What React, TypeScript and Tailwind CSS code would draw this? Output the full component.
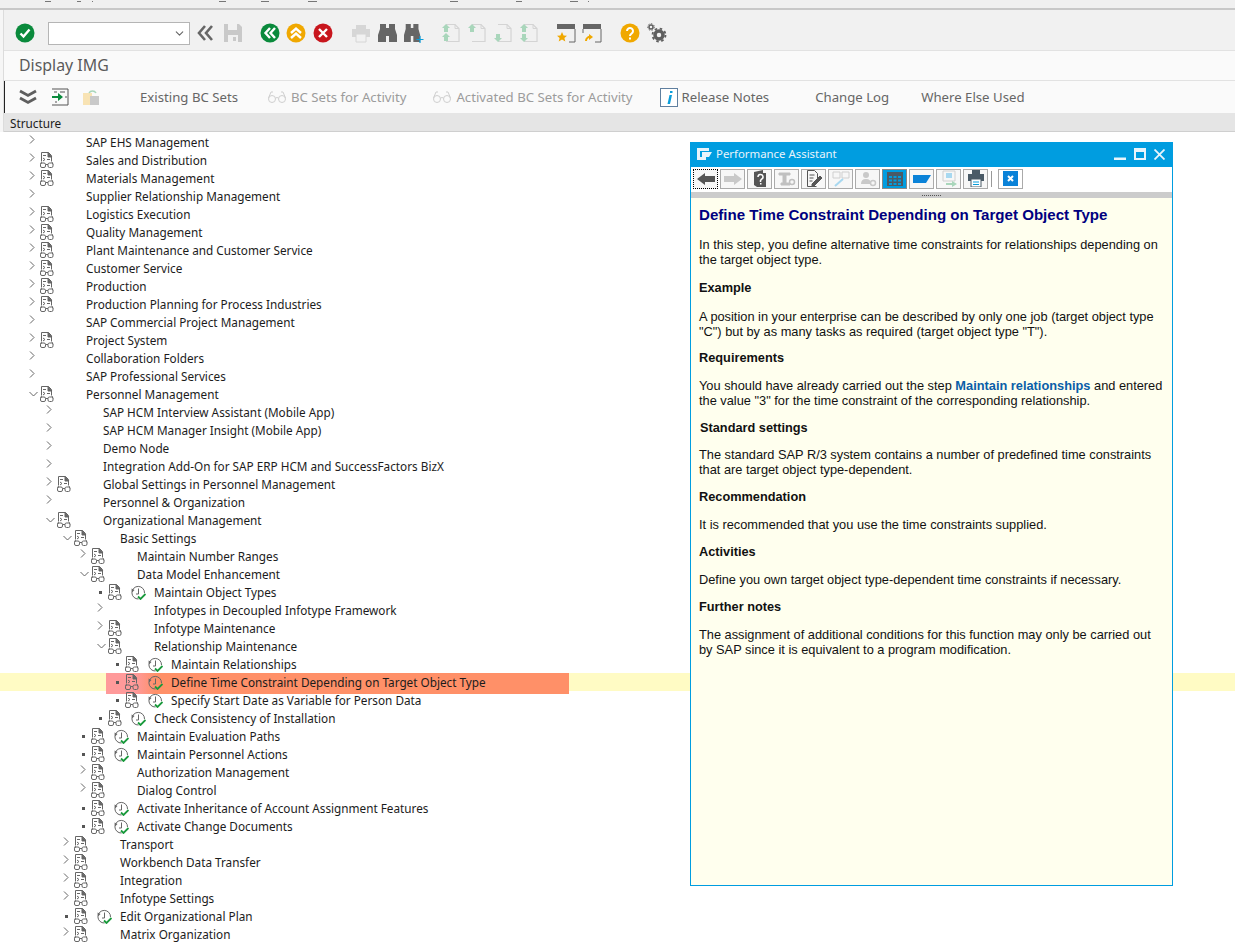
import type { ReactNode } from 'react'
import { ChevronDown } from 'lucide-react'

type Row = {
  label: string
  level: number
  arrow?: 'closed' | 'open'
  doc?: boolean
  run?: boolean
  selected?: boolean
}

const rows: Row[] = [
  { label: 'SAP EHS Management', level: 0, arrow: 'closed' },
  { label: 'Sales and Distribution', level: 0, arrow: 'closed', doc: true },
  { label: 'Materials Management', level: 0, arrow: 'closed', doc: true },
  { label: 'Supplier Relationship Management', level: 0, arrow: 'closed' },
  { label: 'Logistics Execution', level: 0, arrow: 'closed', doc: true },
  { label: 'Quality Management', level: 0, arrow: 'closed', doc: true },
  { label: 'Plant Maintenance and Customer Service', level: 0, arrow: 'closed', doc: true },
  { label: 'Customer Service', level: 0, arrow: 'closed', doc: true },
  { label: 'Production', level: 0, arrow: 'closed', doc: true },
  { label: 'Production Planning for Process Industries', level: 0, arrow: 'closed', doc: true },
  { label: 'SAP Commercial Project Management', level: 0, arrow: 'closed' },
  { label: 'Project System', level: 0, arrow: 'closed', doc: true },
  { label: 'Collaboration Folders', level: 0, arrow: 'closed' },
  { label: 'SAP Professional Services', level: 0, arrow: 'closed' },
  { label: 'Personnel Management', level: 0, arrow: 'open', doc: true },
  { label: 'SAP HCM Interview Assistant (Mobile App)', level: 1, arrow: 'closed' },
  { label: 'SAP HCM Manager Insight (Mobile App)', level: 1, arrow: 'closed' },
  { label: 'Demo Node', level: 1, arrow: 'closed' },
  { label: 'Integration Add-On for SAP ERP HCM and SuccessFactors BizX', level: 1, arrow: 'closed' },
  { label: 'Global Settings in Personnel Management', level: 1, arrow: 'closed', doc: true },
  { label: 'Personnel & Organization', level: 1, arrow: 'closed' },
  { label: 'Organizational Management', level: 1, arrow: 'open', doc: true },
  { label: 'Basic Settings', level: 2, arrow: 'open', doc: true },
  { label: 'Maintain Number Ranges', level: 3, arrow: 'closed', doc: true },
  { label: 'Data Model Enhancement', level: 3, arrow: 'open', doc: true },
  { label: 'Maintain Object Types', level: 4, doc: true, run: true },
  { label: 'Infotypes in Decoupled Infotype Framework', level: 4, arrow: 'closed' },
  { label: 'Infotype Maintenance', level: 4, arrow: 'closed', doc: true },
  { label: 'Relationship Maintenance', level: 4, arrow: 'open', doc: true },
  { label: 'Maintain Relationships', level: 5, doc: true, run: true },
  { label: 'Define Time Constraint Depending on Target Object Type', level: 5, doc: true, run: true, selected: true },
  { label: 'Specify Start Date as Variable for Person Data', level: 5, doc: true, run: true },
  { label: 'Check Consistency of Installation', level: 4, doc: true, run: true },
  { label: 'Maintain Evaluation Paths', level: 3, doc: true, run: true },
  { label: 'Maintain Personnel Actions', level: 3, doc: true, run: true },
  { label: 'Authorization Management', level: 3, arrow: 'closed', doc: true },
  { label: 'Dialog Control', level: 3, arrow: 'closed', doc: true },
  { label: 'Activate Inheritance of Account Assignment Features', level: 3, doc: true, run: true },
  { label: 'Activate Change Documents', level: 3, doc: true, run: true },
  { label: 'Transport', level: 2, arrow: 'closed', doc: true },
  { label: 'Workbench Data Transfer', level: 2, arrow: 'closed', doc: true },
  { label: 'Integration', level: 2, arrow: 'closed', doc: true },
  { label: 'Infotype Settings', level: 2, arrow: 'closed', doc: true },
  { label: 'Edit Organizational Plan', level: 2, doc: true, run: true },
  { label: 'Matrix Organization', level: 2, arrow: 'closed', doc: true },
]

// bottoms of the menu bar text, which the screenshot cuts off
const menuScraps = [
  [45, 6], [77, 4], [92, 1], [219, 7], [261, 8], [308, 9], [450, 8], [516, 6], [570, 8], [588, 1],
]

function DocIcon() {
  return (
    <svg width="14" height="16" viewBox="0 0 14 16" fill="none" stroke="#666" strokeWidth="1">
      <path d="M1.500 9.500V.5h7l3 3v6" />
      <path d="M8 .5l4 4.500H8z" fill="#666" />
      <path d="M3 3.500h3M3 6l2 1.500L3 9M7 7.500h3" />
      <rect x=".5" y="11" width="5" height="4.500" rx="1.500" />
      <rect x="8" y="11" width="5" height="4.500" rx="1.500" />
      <path d="M5.500 12.500h2.500M.5 12.500l1-2.500M13 12.500l-1-2.500" />
    </svg>
  )
}

function RunIcon() {
  return (
    <svg width="15" height="15" viewBox="0 0 15 15" fill="none">
      <path d="M13.500 8a6.300 6.300 0 1 0-6 6" stroke="#666" strokeWidth="1" />
      <path d="M.5 3.500l.5 4L3.500 5z" fill="#666" />
      <path d="M7.500 3.500V9H5" stroke="#666" strokeWidth="1" />
      <path d="M7 11.500l2.500 2.500L14.500 9" stroke="#1a9a3c" strokeWidth="1.800" />
    </svg>
  )
}

function TreeRow({ row }: { row: Row }) {
  return (
    <div className={`relative flex h-[18px] items-center ${row.selected ? 'bg-[#fffbc4]' : ''}`}>
      {row.selected && (
        <div className="absolute left-[106px] top-0 h-[21px] w-[463px] bg-[linear-gradient(90deg,#ff9a9a_0,#ff9a9a_30px,#ff9068_50px)]" />
      )}
      <div className="relative flex h-full items-center" style={{ marginLeft: row.level * 17 }}>
        <span className="flex w-[40px] items-center pl-[29px]">
          {row.arrow === 'closed' && (
            <svg width="6" height="9" viewBox="0 0 6 9" fill="none" stroke="#666" className="-translate-y-[3px]">
              <path d="M1 .5l4 4-4 4" />
            </svg>
          )}
          {row.arrow === 'open' && (
            <svg width="9" height="6" viewBox="0 0 9 6" fill="none" stroke="#666">
              <path d="M.5 1l4 4 4-4" />
            </svg>
          )}
          {!row.arrow && row.doc && <span className="ml-[2px] h-[3px] w-[3px] shrink-0 bg-[#555]" />}
        </span>
        <span className="flex h-[16px] w-[14px] justify-center">{row.doc && <DocIcon />}</span>
        <span className="ml-[9px] flex h-[15px] w-[15px] justify-center">{row.run && <RunIcon />}</span>
        <span className="ml-[8px] translate-y-[1px] whitespace-nowrap text-[11.750px] text-[#1c1c1c]">{row.label}</span>
      </div>
    </div>
  )
}

function RoundIcon({ color, children }: { color: string; children: ReactNode }) {
  return (
    <svg width="20" height="20" viewBox="0 0 20 20">
      <circle cx="10" cy="10" r="9.500" fill={color} />
      <g fill="none" stroke="#fff" strokeWidth="2.400">{children}</g>
    </svg>
  )
}

function Binoculars({ plus }: { plus?: boolean }) {
  return (
    <svg width="20" height="20" viewBox="0 0 20 20">
      <path d="M2 1h6v4h3V1h6v5l2 6v7h-8v-6H8v6H0v-7l2-6z" fill="#666" transform={plus ? 'scale(.85 1)' : ''} />
      {plus && <path d="M16 13v7M12.500 16.500h7" stroke="#0a9dda" strokeWidth="1.200" />}
    </svg>
  )
}

function PageArrows({ up, down }: { up: number; down: number }) {
  const upArrow = (y: number) => <path key={`u${y}`} d={`M5 ${y}l4 4H7v4H3v-4H1z`} fill="#a9d6bb" />
  const downArrow = (y: number) => <path key={`d${y}`} d={`M5 ${y + 8}l4-4H7v-4H3v4H1z`} fill="#a9d6bb" />
  return (
    <svg width="20" height="20" viewBox="0 0 20 20" fill="none">
      <path d="M5 1.500h9l4 4v13H5" stroke="#d4d4d4" strokeWidth="1.200" />
      <path d="M14 1.500v4h4" stroke="#d4d4d4" />
      {up === 2 && [upArrow(1), upArrow(10)]}
      {up === 1 && upArrow(1)}
      {down === 2 && [downArrow(1), downArrow(11)]}
      {down === 1 && downArrow(11)}
    </svg>
  )
}

function Glasses({ className = '' }: { className?: string }) {
  return (
    <svg width="18" height="12" viewBox="0 0 18 12" fill="none" stroke="#cfcfcf" strokeWidth="1" className={className}>
      <circle cx="4" cy="8" r="3.500" />
      <circle cx="14" cy="8" r="3.500" />
      <path d="M7.500 7q1.500-1 3 0M.5 7L3 1h2M17.500 7L15 1h-2" />
    </svg>
  )
}

function PopButton({ children, active }: { children: ReactNode; active?: boolean }) {
  return (
    <span className={`flex h-[20px] w-[25px] items-center justify-center border ${active ? 'border-[#888] bg-[#009de0]' : 'border-[#aaa] bg-[#f7f7f7]'}`}>
      {children}
    </span>
  )
}

function Heading({ children, className = '' }: { children: ReactNode; className?: string }) {
  return <p className={`h-[15px] text-[12.750px] font-bold leading-[15px] text-[#111] ${className}`}>{children}</p>
}

function Para({ children, className = '' }: { children: ReactNode; className?: string }) {
  return <p className={`text-[12.800px] leading-[14.700px] text-[#111] ${className}`}>{children}</p>
}

export default function App() {
  return (
    <div className="relative h-[944px] w-[1235px] overflow-hidden bg-white font-['Noto_Sans',sans-serif]">
      {/* clipped menu bar */}
      <div className="relative h-[10px] border-b-2 border-[#c8c8c8] bg-[#f0f0f0]">
        {menuScraps.map(([x, w]) => (
          <span key={x} className="absolute top-[1px] h-[1px] bg-[#777]" style={{ left: x, width: w }} />
        ))}
      </div>

      {/* main toolbar */}
      <div className="flex h-[40px] items-center bg-[#f1f1f1] pl-[15px] pt-[6px]">
        <RoundIcon color="#0a8a3c"><path d="M5.500 10.500l3 3 6-7" /></RoundIcon>
        <div className="ml-[13px] flex h-[23px] w-[142px] items-center justify-end border border-[#b5b5b5] bg-white pr-[3px]">
          <ChevronDown size={13} color="#666" />
        </div>
        <svg width="17" height="16" viewBox="0 0 17 16" className="ml-[7px]" fill="none" stroke="#666" strokeWidth="2.600">
          <path d="M8 1L2 8l6 7M15 1L9 8l6 7" />
        </svg>
        <svg width="20" height="20" viewBox="0 0 20 20" className="ml-[9px]">
          <path d="M1 1h15l3 3v15H1z" fill="#c9c9c9" />
          <path d="M5 1h9v6H5zM5 12h10v7H5z" fill="#f1f1f1" />
          <path d="M10 14h3v4h-3z" fill="#c9c9c9" />
        </svg>
        <span className="ml-[17px]" />
        <RoundIcon color="#0a8a3c"><path d="M10 5l-4.500 5 4.500 5M15 5l-4.500 5 4.500 5" /></RoundIcon>
        <span className="ml-[6px]" />
        <RoundIcon color="#f0a800"><path d="M5 10l5-4.500 5 4.500M5 15l5-4.500 5 4.500" /></RoundIcon>
        <span className="ml-[7px]" />
        <RoundIcon color="#c8161d"><path d="M6 6l8 8M14 6l-8 8" /></RoundIcon>
        <svg width="20" height="20" viewBox="0 0 20 20" className="ml-[18px]">
          <path d="M5 2h10v4H5zM1 6h18v8H1z" fill="#d6d6d6" />
          <path d="M5 11h10v8H5z" fill="#f1f1f1" stroke="#d6d6d6" />
        </svg>
        <span className="ml-[7px]"><Binoculars /></span>
        <span className="ml-[6px]"><Binoculars plus /></span>
        <span className="ml-[17px]"><PageArrows up={2} down={0} /></span>
        <span className="ml-[6px]"><PageArrows up={1} down={0} /></span>
        <span className="ml-[6px]"><PageArrows up={0} down={1} /></span>
        <span className="ml-[6px]"><PageArrows up={1} down={1} /></span>
        <svg width="20" height="20" viewBox="0 0 20 20" className="ml-[17px]" fill="none">
          <path d="M1 1h18v5H1z" fill="#666" />
          <path d="M19 6v13h-6" stroke="#666" />
          <path d="M6 9l1.600 3.400 3.400.3-2.600 2.200.9 3.600L6 16.600 2.700 18.500l.9-3.600L1 12.700l3.400-.3z" fill="#f0a800" />
        </svg>
        <svg width="20" height="20" viewBox="0 0 20 20" className="ml-[6px]" fill="none">
          <path d="M1 1h18v5H1z" fill="#666" />
          <path d="M19 6v13h-6M1 6v4" stroke="#666" />
          <path d="M9 14a4 4 0 0 0-5 4" stroke="#f0a800" strokeWidth="2" />
          <path d="M7 11l4 3-4 3z" fill="#f0a800" />
        </svg>
        <span className="ml-[18px]" />
        <svg width="20" height="20" viewBox="0 0 20 20">
          <circle cx="10" cy="10" r="9.500" fill="#f0a800" />
          <path d="M7 8a3 3 0 1 1 4.500 2.600c-1 .6-1.500 1-1.500 2.400" fill="none" stroke="#fff" strokeWidth="2" />
          <path d="M9 14.500h2v2H9z" fill="#fff" />
        </svg>
        <svg width="20" height="20" viewBox="0 0 20 20" className="ml-[7px]" fill="none" stroke="#5f5f5f">
          <circle cx="12" cy="12" r="4" strokeWidth="3.500" />
          <circle cx="12" cy="12" r="6.500" strokeWidth="1.800" strokeDasharray="2.500 2.600" />
          <circle cx="4" cy="4" r="2" strokeWidth="1.500" />
          <circle cx="4" cy="4" r="3.300" strokeWidth="1" strokeDasharray="1.500 1.500" />
        </svg>
      </div>

      {/* title */}
      <div className="flex h-[31px] items-center border-y border-[#e2e2e2] bg-[#fafafa] pl-[19px] text-[15.900px] text-[#5a5a5a]">
        Display IMG
      </div>

      {/* application toolbar */}
      <div className="relative flex h-[32px] items-center bg-[#fafafa] text-[13.200px] text-[#666]">
        <span className="absolute left-[4px] top-0 h-full w-[1px] bg-[#222]" />
        <svg width="18" height="16" viewBox="0 0 18 16" className="ml-[19px]" fill="none" stroke="#5f5f5f" strokeWidth="2.800">
          <path d="M1 2l8 4.500L17 2M1 9l8 4.500L17 9" />
        </svg>
        <svg width="18" height="18" viewBox="0 0 18 18" className="ml-[14px]" fill="none">
          <path d="M1 1h16v16H1" stroke="#555" />
          <path d="M1 8h6V5l5 4-5 4v-3H1z" fill="#0a8a3c" />
          <path d="M3 4h3M9 4h5M14 9h2M4 14h2" stroke="#555" />
        </svg>
        <svg width="18" height="18" viewBox="0 0 18 18" className="ml-[13px]">
          <path d="M1 5h9v12H1z" fill="#f8e3b4" />
          <path d="M8 8h9v9H8z" fill="#c9c9c9" />
          <path d="M7 5a4 4 0 0 1 7 0" stroke="#a9d6bb" strokeWidth="1.500" fill="none" />
        </svg>
        <span className="ml-[40px] pt-[1px]">Existing BC Sets</span>
        <Glasses className="ml-[30px]" />
        <span className="ml-[5px] pt-[1px] text-[#9c9c9c]">BC Sets for Activity</span>
        <Glasses className="ml-[27px]" />
        <span className="ml-[5px] pt-[1px] text-[#9c9c9c]">Activated BC Sets for Activity</span>
        <svg width="18" height="19" viewBox="0 0 18 19" className="ml-[27px]">
          <rect x=".5" y=".5" width="17" height="18" fill="#fff" stroke="#5f7f9f" />
          <path d="M10 3h2.500v2H10zM9.500 7h2.500l-2 9H7.500z" fill="#0a9dda" />
        </svg>
        <span className="ml-[4px] pt-[1px]">Release Notes</span>
        <span className="ml-[46px] pt-[1px]">Change Log</span>
        <span className="ml-[32px] pt-[1px]">Where Else Used</span>
      </div>

      {/* structure header */}
      <div className="flex h-[19px] items-center border-b border-[#cfcfcf] bg-[#e5e5e5] pl-[10px] pt-[3px] text-[11.750px] text-[#1c1c1c]">
        Structure
      </div>

      {/* pale strip along the left edge of the header area */}
      <div className="absolute left-0 top-[10px] h-[122px] w-[4px] border-r border-[#dcdcdc] bg-[#f6f6f6]" />

      {/* tree */}
      <div className="pt-[1px]">
        {rows.map((row) => (
          <TreeRow key={row.label} row={row} />
        ))}
      </div>

      {/* floating help window */}
      <div className="absolute left-[690px] top-[142px] flex h-[744px] w-[483px] flex-col border border-[#009de0] bg-[#ffffee]">
        <div className="flex h-[24px] shrink-0 items-center bg-[#009de0] pb-[2px] pl-[6px] pr-[7px] text-[11.400px] text-[#e8f4fb]">
          <svg width="15" height="12" viewBox="0 0 15 12">
            <path d="M0 0h12v3H3v6h6v3H0z" fill="#e8f4fb" />
            <path d="M5 4h10l-3 5H5z" fill="#e8f4fb" />
          </svg>
          <span className="ml-[4px]">Performance Assistant</span>
          <span className="ml-auto flex items-center gap-[7px]">
            <svg width="12" height="12" viewBox="0 0 12 12"><path d="M0 9.500h12V12H0z" fill="#e8f4fb" /></svg>
            <svg width="12" height="12" viewBox="0 0 12 12" fill="none" stroke="#e8f4fb" className="ml-[1px]"><path d="M1 1h10v10H1z" strokeWidth="2" /><path d="M1 3h10" strokeWidth="2" /></svg>
            <svg width="11" height="11" viewBox="0 0 11 11" fill="none" stroke="#e8f4fb" strokeWidth="1.800" className="ml-[1px]"><path d="M.5.500l10 10M10.500.500l-10 10" /></svg>
          </span>
        </div>
        <div className="flex h-[25px] shrink-0 items-center gap-[2px] bg-white pb-[2px] pl-[2px]">
          <span className="flex h-[20px] w-[25px] items-center justify-center border border-dotted border-black bg-[#f7f7f7]">
            <svg width="18" height="12" viewBox="0 0 18 12"><path d="M0 6l8-6v3h10v6H8v3z" fill="#555" /></svg>
          </span>
          <PopButton><svg width="18" height="12" viewBox="0 0 18 12"><path d="M18 6l-8-6v3H0v6h10v3z" fill="#c9c9c9" /></svg></PopButton>
          <PopButton>
            <svg width="14" height="17" viewBox="0 0 14 17"><path d="M1 2l9-2v3h3v14H4l-3-2z" fill="#555" /><path d="M5 7a2.500 2.500 0 1 1 3.500 2.200L7.500 10.500V12" fill="none" stroke="#fff" strokeWidth="1.500" /><path d="M7 13h1.500v1.500H7z" fill="#fff" /></svg>
          </PopButton>
          <PopButton>
            <svg width="18" height="16" viewBox="0 0 18 16" fill="none" stroke="#c0c0c0"><path d="M1 2h11v2H8v8h4v2H3v-2h2V4H1z" fill="#c0c0c0" /><circle cx="14" cy="11" r="2.500" strokeWidth="1.500" /></svg>
          </PopButton>
          <PopButton>
            <svg width="16" height="17" viewBox="0 0 16 17" fill="none" stroke="#555"><path d="M1.500.500h7l3 3V8M1.500.500v16h9" /><path d="M3.500 5h5M3.500 8h4M3.500 11h3" /><path d="M6 14l8-8 2 2-8 8H6z" fill="#555" /></svg>
          </PopButton>
          <PopButton>
            <svg width="18" height="16" viewBox="0 0 18 16" fill="none" stroke="#cfcfcf"><path d="M1 1h7v6H1zM10 1h7v6h-7z" /><path d="M3 15l8-7" stroke="#a8d8f0" strokeWidth="2" /></svg>
          </PopButton>
          <PopButton>
            <svg width="18" height="16" viewBox="0 0 18 16" fill="#c9c9c9"><circle cx="7" cy="4" r="3" /><path d="M2 13q0-5 5-5t5 5z" /><circle cx="14" cy="12" r="2.500" fill="none" stroke="#c9c9c9" strokeWidth="1.500" /></svg>
          </PopButton>
          <PopButton active>
            <svg width="18" height="16" viewBox="0 0 18 16"><path d="M1 1h16v14H1z" fill="#4a5a66" /><path d="M3 5h3v2H3zM7.500 5h3v2h-3zM12 5h3v2h-3zM3 8.500h3v2H3zM7.500 8.500h3v2h-3zM12 8.500h3v2h-3zM3 12h3v2H3zM7.500 12h3v2h-3zM12 12h3v2h-3z" fill="#009de0" /></svg>
          </PopButton>
          <PopButton>
            <svg width="20" height="12" viewBox="0 0 20 12"><path d="M1 2h18l-5 8H1z" fill="#0a82d8" /></svg>
          </PopButton>
          <PopButton>
            <svg width="18" height="17" viewBox="0 0 18 17" fill="none"><path d="M3 1h12v10H3z" stroke="#cfcfcf" /><path d="M6 3h6v5H6z" fill="#a8d8f0" /><path d="M6 13h6v-2l5 3-5 3v-2H6z" fill="#a9d6bb" /></svg>
          </PopButton>
          <PopButton>
            <svg width="18" height="17" viewBox="0 0 18 17"><path d="M5 0h8v4H5z" fill="#4a5a66" /><path d="M1 4h16v7H1z" fill="#4a5a66" /><path d="M4 9h10v8H4z" fill="#fff" stroke="#4a5a66" /><path d="M6 12h6M6 14.500h6" stroke="#0a9dda" /></svg>
          </PopButton>
          <span className="ml-[1px] h-[16px] w-[1px] bg-[#999]" />
          <span className="ml-[4px] flex h-[20px] w-[25px] items-center justify-center border border-[#aaa] bg-white">
            <svg width="15" height="15" viewBox="0 0 15 15"><path d="M0 0h15v15H0z" fill="#0a82d8" /><path d="M5 5l5 5M10 5l-5 5" stroke="#fff" strokeWidth="2" /></svg>
          </span>
        </div>
        <div className="flex h-[6px] shrink-0 items-center justify-center bg-[#cccccc]">
          <span className="h-[1px] w-[19px] border-t border-dotted border-[#555]" />
        </div>
        <div className="flex-1 pl-[8px] pr-[6px] pt-[8px] font-['Liberation_Sans',sans-serif]">
          <h1 className="text-[15.100px] font-bold leading-[17px] text-[#000080]">Define Time Constraint Depending on Target Object Type</h1>
          <Para className="mt-[15px] text-[12.240px]">In this step, you define alternative time constraints for relationships depending on the target object type.</Para>
          <Heading className="mt-[13px]">Example</Heading>
          <Para className="mt-[15px]">A position in your enterprise can be described by only one job (target object type "C") but by as many tasks as required (target object type "T").</Para>
          <Heading className="mt-[10px]">Requirements</Heading>
          <Para className="mt-[14px]">
            You should have already carried out the step <span className="font-bold text-[#0a5ea8]">Maintain relationships</span> and entered the value "3" for the time constraint of the corresponding relationship.
          </Para>
          <Heading className="ml-[1px] mt-[12px]">Standard settings</Heading>
          <Para className="mt-[13px]">The standard SAP R/3 system contains a number of predefined time constraints that are target object type-dependent.</Para>
          <Heading className="mt-[11px]">Recommendation</Heading>
          <Para className="mt-[14px]">It is recommended that you use the time constraints supplied.</Para>
          <Heading className="mt-[12px]">Activities</Heading>
          <Para className="mt-[14px]">Define you own target object type-dependent time constraints if necessary.</Para>
          <Heading className="mt-[11px]">Further notes</Heading>
          <Para className="mt-[14px]">The assignment of additional conditions for this function may only be carried out by SAP since it is equivalent to a program modification.</Para>
        </div>
      </div>
    </div>
  )
}
